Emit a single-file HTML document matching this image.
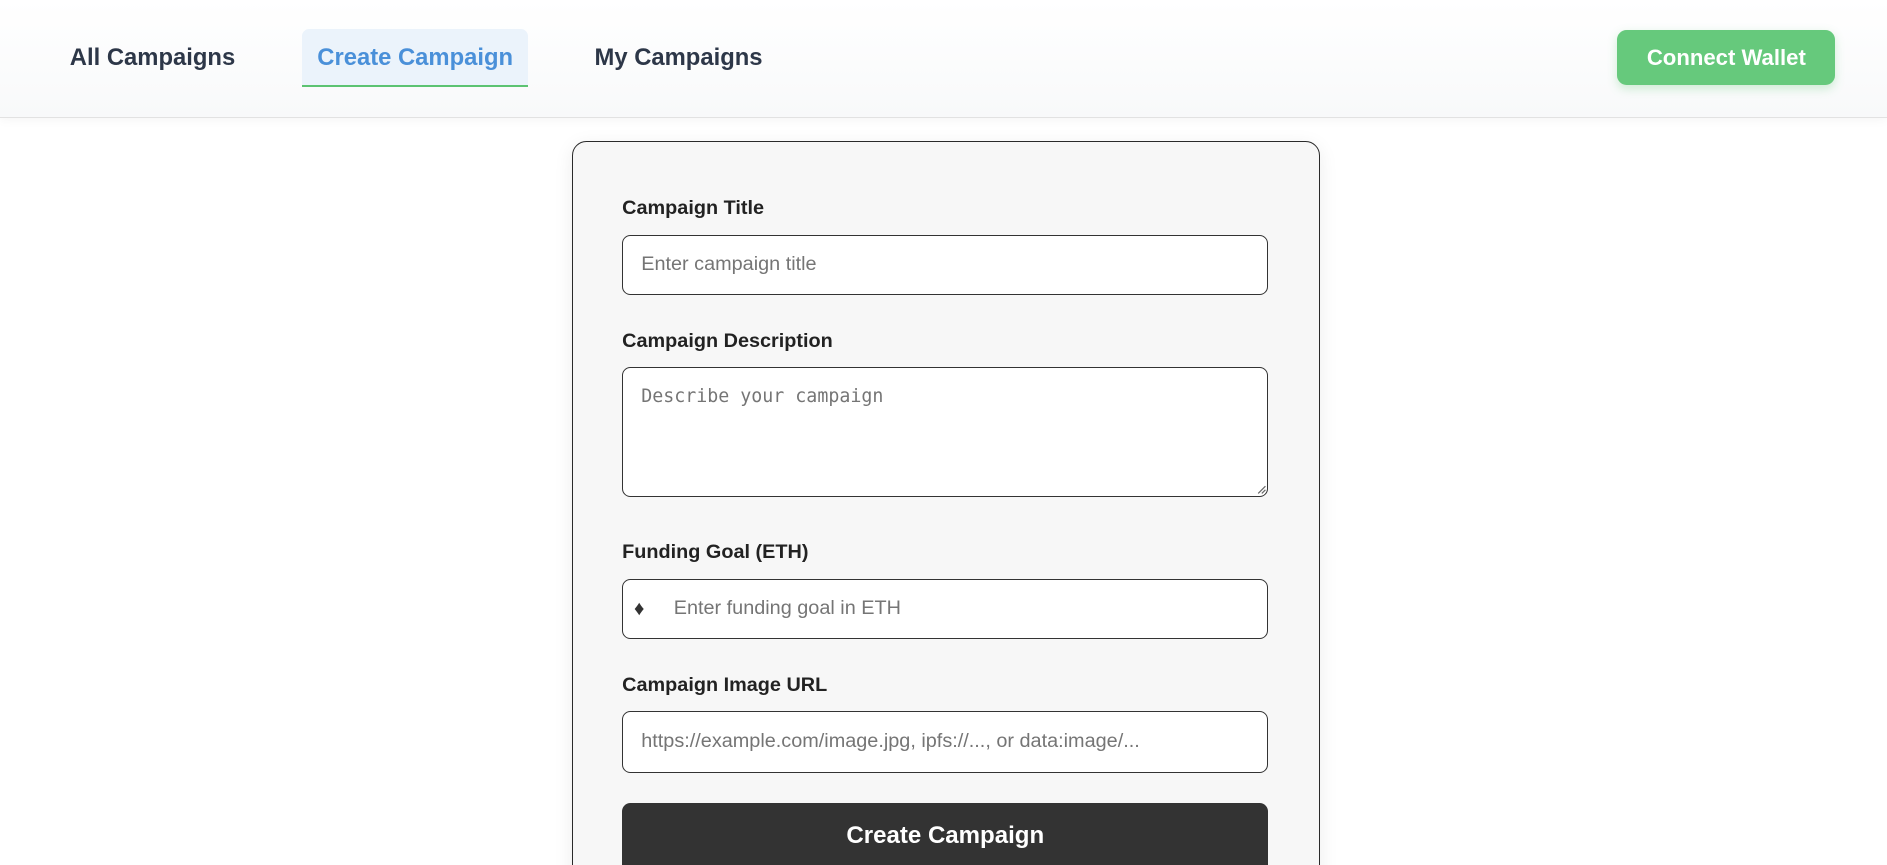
<!DOCTYPE html>
<html style="height:865px;overflow:hidden"><head><meta charset="utf-8"><style>
html,body{margin:0;padding:0;}
body{width:1568px;height:719px;overflow:hidden;zoom:1.20345;background:#fff;font-family:"Liberation Sans",Arial,sans-serif;position:relative;}
.hdr{position:absolute;left:0;top:0;width:1568px;height:97px;background:linear-gradient(#fff,#f8f9fa);border-bottom:1px solid #e2e2e2;box-shadow:0 2px 8px rgba(0,0,0,0.04);}
.nav{position:absolute;top:24px;height:48px;line-height:48px;font-size:19.8px;font-weight:bold;color:#2d3748;}
.act{left:251px;width:188px;text-align:center;background:#ebf3fb;color:#4a90d9;border-radius:6px 6px 0 0;box-sizing:border-box;border-bottom:2px solid #5cc372;}
.cw{position:absolute;left:1344px;top:25px;width:181px;height:46px;line-height:46px;text-align:center;background:#66c97c;color:#fff;font-weight:bold;font-size:18.4px;border-radius:8px;box-shadow:0 3px 8px rgba(102,201,124,0.3);}
.card{position:absolute;left:475px;top:117px;width:620px;height:640px;border:1.5px solid #2a2a2a;border-radius:12px;background:#f7f7f7;box-shadow:0 4px 16px rgba(0,0,0,0.08);}
.lbl{position:absolute;left:517px;font-size:16.5px;font-weight:bold;color:#222;line-height:20px;}
.in{position:absolute;left:517px;width:537px;box-sizing:border-box;border:1px solid #333;border-radius:7px;background:#fff;font-size:16.5px;color:#757575;}
.btn{position:absolute;left:517px;top:667px;width:537px;height:60px;background:#333;border-radius:7px;color:#fff;font-weight:bold;font-size:20px;text-align:center;line-height:55px;}
</style></head><body>
<div class="hdr"></div>
<div class="nav" style="left:58px">All Campaigns</div>
<div class="nav act">Create Campaign</div>
<div class="nav" style="left:494px">My Campaigns</div>
<div class="cw">Connect Wallet</div>
<div class="card"></div>
<div class="lbl" style="top:163px">Campaign Title</div>
<div class="in" style="top:195px;height:50px;line-height:48px;padding-left:15px">Enter campaign title</div>
<div class="lbl" style="top:273px">Campaign Description</div>
<div class="in" style="top:305px;height:108px;padding:15px 0 0 15px;font-family:'DejaVu Sans Mono','Liberation Mono',monospace;font-size:15.2px">Describe your campaign
<svg style="position:absolute;right:1px;bottom:1px" width="8" height="8"><path d="M7 1L1 7M7 4L4 7" stroke="#666" stroke-width="1"/></svg></div>
<div class="lbl" style="top:449px">Funding Goal (ETH)</div>
<div class="in" style="top:481px;height:50px;line-height:48px;padding-left:42px"><span style="position:absolute;left:9px;color:#333;font-size:17px">♦</span>Enter funding goal in ETH</div>
<div class="lbl" style="top:559px">Campaign Image URL</div>
<div class="in" style="top:591px;height:51px;line-height:49px;padding-left:15px">https://example.com/image.jpg, ipfs://..., or data:image/...</div>
<div class="btn">Create Campaign</div>
</body></html>
